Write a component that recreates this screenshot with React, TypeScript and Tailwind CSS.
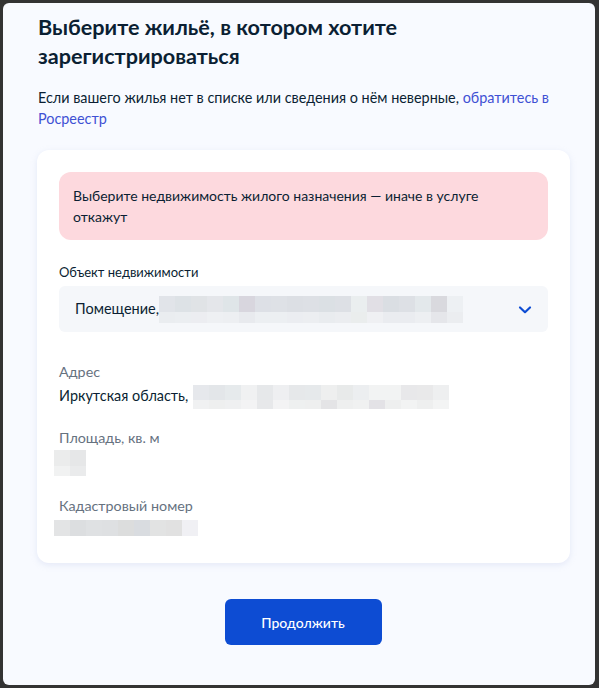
import React from "react";

const selBlocks1 = ["#e1e4e9","#dde2e6","#e0e3e6","#e4e6ea","#dfe5e8","#d8d6de","#dde0e6","#dee1e6","#dcdfe4","#dde0e5","#dbe0e4","#dde0e5","#eaeeef","#e1dfe5","#dadee3","#dde0e5","#e3e8eb","#d9d9de","#edf0f3"];
const selBlocks2 = ["#eaedf0","#ebeef1","#ecedf1","#eef0f3","#edeff2","#e8eaee","#eceff2","#eceff2","#ebedf1","#eceef1","#e9ecef","#ebedf0","#eaeded","#eff0f3","#eaecf0","#eaecf0","#edeff2","#e5e6ea","#ebedf0"];
const adrBlocks1 = ["#e6e8ec","#e3e6e9","#e6eaec","#f0f1f2","#e6e8ea","#eeeff1","#e6e8ea","#e6e9eb","#eeefef","#e8eaea","#eceef0","#f2f3f3","#f2f3f3","#e8e8ea","#e9e9ea","#eeeff0"];
const adrBlocks2 = ["#f0f1f2","#eeefef","#eff0f1","#f3f3f4","#e7e8ea","#f3f3f4","#eef0f0","#eeefef","#e4e4e6","#eeefef","#f0f1f1","#e3e2e6","#eeefef","#f2f3f3","#eeefef","#f3f4f4"];
const areaBlocks1 = ["#ebecec","#e6e7e8"];
const areaBlocks2 = ["#f1f2f2","#eaebec"];
const kadBlocks = ["#e3e4e5","#dcdee0","#dfe1e3","#dee0e2","#dcdddd","#d9dce0","#e2e3e3","#e1e1e1","#f0f0f4"];

function Blur({ rows, h }: { rows: string[][]; h: number[] }) {
  return (
    <div className="flex flex-col">
      {rows.map((r, i) => (
        <div key={i} className="flex">
          {r.map((c, j) => (
            <div key={j} className="w-[16px]" style={{ background: c, height: h[i] }} />
          ))}
        </div>
      ))}
    </div>
  );
}

export default function App() {
  return (
    <div className="w-[599px] h-[688px] bg-[#333333] pt-[3px] pl-[3px] pr-[4px] pb-[3px]" style={{ fontFamily: "Lato, 'Noto Sans', sans-serif" }}>
      <div className="h-full w-full bg-[#f8faff] rounded-[6px] px-[35px] pt-[10px] flex flex-col text-[#0b1f33]">
        <h1 className="text-[21.6px] leading-[29px] font-bold">
          Выберите жильё, в котором хотите<br />зарегистрироваться
        </h1>
        <p className="mt-[16px] text-[14.4px] leading-[21px]">
          Если вашего жилья нет в списке или сведения о нём неверные, <span className="text-[#3f51d4]">обратитесь в Росреестр</span>
        </p>
        <div className="mt-[21px] -ml-[1px] -mr-[10px] bg-white rounded-[12px] shadow-[0_2px_6px_rgba(170,185,225,0.25)] px-[22px] pt-[22px] pb-[27px] flex flex-col">
          <div className="bg-[#fdd9de] rounded-[12px] px-[14px] py-[13px] text-[14px] leading-[21px] text-[#0b1f33]">
            Выберите недвижимость жилого назначения — иначе в услуге<br />откажут
          </div>
          <div className="mt-[24px] text-[13px] leading-[16px] text-[#0b1f33]">Объект недвижимости</div>
          <div className="mt-[6px] h-[46px] bg-[#f5f7fa] rounded-[6px] pl-[16px] pr-[16px] flex items-center justify-between">
            <div className="flex items-center">
              <span className="text-[14.5px] leading-[20px] text-[#0b1f33]">Помещение,</span>
              <Blur rows={[selBlocks1, selBlocks2]} h={[16, 11]} />
            </div>
            <svg width="14" height="10" viewBox="0 0 14 10" className="mt-[2px]">
              <path d="M2 2.5 L7 7.2 L12 2.5" stroke="#0d4cd3" strokeWidth="2.2" fill="none" strokeLinecap="round" strokeLinejoin="round" />
            </svg>
          </div>
          <div className="mt-[31px] text-[14.3px] leading-[18px] text-[#66727f]">Адрес</div>
          <div className="mt-[6px] flex items-start">
            <span className="text-[14.4px] leading-[18px] text-[#0b1f33]">Иркутская область,</span>
            <div className="ml-[5px] mt-[-2px]">
              <Blur rows={[adrBlocks1, adrBlocks2]} h={[15, 9]} />
            </div>
          </div>
          <div className="mt-[20px] text-[14.3px] leading-[18px] text-[#66727f]">Площадь, кв. м</div>
          <div className="mt-[3px] -ml-[5px]">
            <Blur rows={[areaBlocks1, areaBlocks2]} h={[16, 10]} />
          </div>
          <div className="mt-[21px] text-[14.3px] leading-[18px] text-[#66727f]">Кадастровый номер</div>
          <div className="mt-[5px] -ml-[5px]">
            <Blur rows={[kadBlocks]} h={[16]} />
          </div>
        </div>
        <div className="mt-[36px] flex justify-center">
          <button className="ml-[8px] w-[157px] h-[46px] bg-[#0d4cd3] rounded-[6px] text-white text-[14px] font-medium">
            Продолжить
          </button>
        </div>
      </div>
    </div>
  );
}
